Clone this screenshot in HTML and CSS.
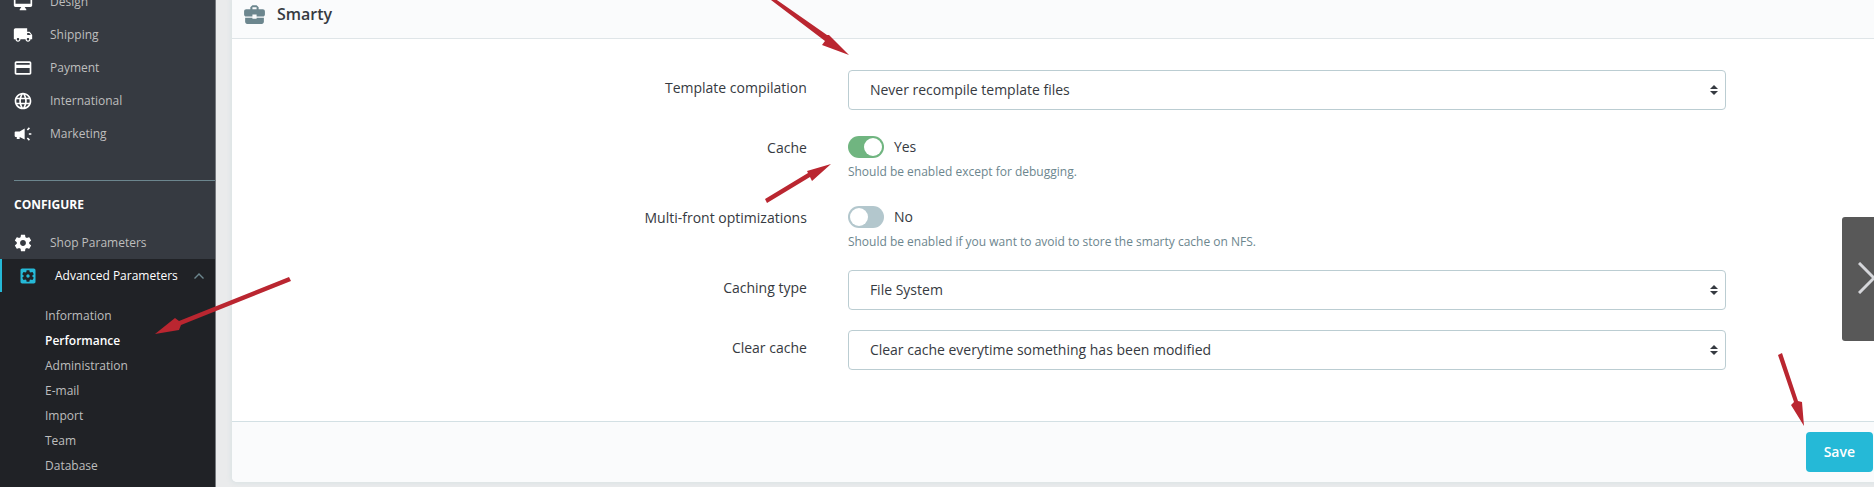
FILE: index.html
```
<!DOCTYPE html>
<html lang="en">
<head>
<meta charset="UTF-8">
<meta name="viewport" content="width=device-width, initial-scale=1.0">
<title>Performance</title>
<link rel="stylesheet" href="styles.css">
</head>
<body>
<nav class="sidebar">
    <a class="item" href="#"><svg viewBox="0 0 24 24"><path d="M21 2H3c-1.100 0-2 .9-2 2v12c0 1.100.9 2 2 2h7l-2 3v1h8v-1l-2-3h7c1.100 0 2-.9 2-2V4c0-1.100-.9-2-2-2zm0 12H3V4h18v10z"/></svg>Design</a>
    <a class="item" href="#"><svg viewBox="0 0 24 24"><path d="M20 8h-3V4H3c-1.100 0-2 .9-2 2v11h2c0 1.660 1.340 3 3 3s3-1.340 3-3h6c0 1.660 1.340 3 3 3s3-1.340 3-3h2v-5l-3-4zM6 18.500c-.83 0-1.500-.67-1.500-1.500s.67-1.500 1.500-1.500 1.500.67 1.500 1.500-.67 1.500-1.500 1.500zm13.500-9l1.960 2.500H17V9.500h2.500zm-1.500 9c-.83 0-1.500-.67-1.500-1.500s.67-1.500 1.500-1.500 1.500.67 1.500 1.500-.67 1.500-1.500 1.500z"/></svg>Shipping</a>
    <a class="item" href="#"><svg viewBox="0 0 24 24"><path d="M20 4H4c-1.110 0-2 .89-2 2v12c0 1.110.89 2 2 2h16c1.110 0 2-.89 2-2V6c0-1.110-.89-2-2-2zm0 14H4v-6h16v6zm0-10H4V6h16v2z"/></svg>Payment</a>
    <a class="item" href="#"><svg viewBox="0 0 24 24"><path d="M11.990 2C6.470 2 2 6.480 2 12s4.470 10 9.990 10C17.520 22 22 17.520 22 12S17.520 2 11.990 2zm6.930 6h-2.950c-.32-1.250-.78-2.450-1.380-3.560 1.840.63 3.370 1.910 4.330 3.560zM12 4.040c.83 1.200 1.480 2.530 1.910 3.960h-3.820c.43-1.430 1.080-2.760 1.910-3.960zM4.260 14C4.100 13.360 4 12.690 4 12s.1-1.360.26-2h3.380c-.08.66-.14 1.320-.14 2s.06 1.340.14 2H4.260zm.82 2h2.950c.32 1.250.78 2.450 1.380 3.560-1.840-.63-3.370-1.900-4.330-3.560zm2.950-8H5.080c.96-1.660 2.490-2.930 4.330-3.560C8.810 5.550 8.350 6.750 8.030 8zM12 19.960c-.83-1.200-1.480-2.530-1.910-3.960h3.820c-.43 1.430-1.080 2.760-1.910 3.960zM14.340 14H9.660c-.09-.66-.16-1.320-.16-2s.07-1.350.16-2h4.680c.09.65.16 1.320.16 2s-.07 1.340-.16 2zm.25 5.560c.6-1.110 1.060-2.310 1.380-3.560h2.950c-.96 1.650-2.490 2.930-4.330 3.560zM16.360 14c.08-.66.14-1.320.14-2s-.06-1.340-.14-2h3.380c.16.64.26 1.310.26 2s-.1 1.360-.26 2h-3.380z"/></svg>International</a>
    <a class="item" href="#"><svg viewBox="0 0 24 24"><path d="M2 10c0-.6.400-1 1-1h5l6-3.500v13L8 15.500V18H4.500v-2.500H3c-.6 0-1-.4-1-1zM19 11h3v2h-3zM16.500 6.500l2.500-2.500 1.400 1.400-2.500 2.500zM16.500 17.500l1.400-1.400 2.500 2.500L19 20z"/></svg>Marketing</a>

    <h2 class="title">CONFIGURE</h2>
    <a class="item" href="#"><svg viewBox="0 0 24 24"><path d="M19.430 12.980c.04-.32.07-.64.07-.98s-.03-.66-.07-.98l2.110-1.650c.19-.15.24-.42.12-.64l-2-3.460c-.12-.22-.39-.3-.61-.22l-2.490 1c-.52-.4-1.080-.73-1.690-.98l-.38-2.650C14.460 2.180 14.250 2 14 2h-4c-.25 0-.46.18-.49.42l-.38 2.650c-.61.25-1.170.59-1.690.98l-2.490-1c-.23-.09-.49 0-.61.22l-2 3.460c-.13.22-.07.49.12.64l2.110 1.650c-.04.32-.07.65-.07.98s.03.66.07.98l-2.110 1.650c-.19.15-.24.42-.12.64l2 3.460c.12.22.39.3.61.22l2.490-1c.52.4 1.080.73 1.690.98l.38 2.650c.03.24.24.42.49.42h4c.25 0 .46-.18.49-.42l.38-2.650c.61-.25 1.170-.59 1.690-.98l2.490 1c.23.09.49 0 .61-.22l2-3.460c.12-.22.07-.49-.12-.64l-2.110-1.650zM12 15.500c-1.930 0-3.500-1.570-3.500-3.500s1.570-3.500 3.500-3.500 3.500 1.570 3.500 3.500-1.570 3.500-3.500 3.500z"/></svg>Shop Parameters</a>

    <div class="open">
        <a class="item current" href="#"><svg viewBox="0 0 24 24"><path d="M12 10c-1.100 0-2 .9-2 2s.9 2 2 2 2-.9 2-2-.9-2-2-2zm7-7H5c-1.110 0-2 .9-2 2v14c0 1.100.89 2 2 2h14c1.110 0 2-.9 2-2V5c0-1.100-.89-2-2-2zm-1.750 9c0 .23-.02.46-.05.68l1.480 1.160c.13.11.17.3.08.45l-1.400 2.420c-.09.15-.27.21-.43.15l-1.740-.7c-.36.28-.76.51-1.180.69l-.26 1.850c-.03.17-.18.3-.35.3h-2.800c-.17 0-.32-.13-.35-.29l-.26-1.850c-.43-.18-.82-.41-1.180-.69l-1.740.7c-.16.06-.34 0-.43-.15l-1.400-2.420c-.09-.15-.05-.34.08-.45l1.480-1.160c-.03-.23-.05-.46-.05-.69s.02-.46.05-.68l-1.480-1.160c-.13-.11-.17-.3-.08-.45l1.400-2.420c.09-.15.27-.21.43-.15l1.740.7c.36-.28.76-.51 1.180-.69l.26-1.850c.03-.17.18-.3.35-.3h2.800c.17 0 .32.13.35.29l.26 1.850c.43.18.82.41 1.180.69l1.740-.7c.16-.06.34 0 .43.15l1.400 2.420c.09.15.05.34-.08.45l-1.480 1.160c.03.23.05.46.05.69z"/></svg>Advanced Parameters<svg class="chevron" viewBox="0 0 10 6"><path d="M5 0l5 5-1 1-4-4-4 4-1-1z"/></svg></a>
        <ul class="submenu">
            <li><a href="#">Information</a></li>
            <li><a class="active" href="#">Performance</a></li>
            <li><a href="#">Administration</a></li>
            <li><a href="#">E-mail</a></li>
            <li><a href="#">Import</a></li>
            <li><a href="#">Team</a></li>
            <li><a href="#">Database</a></li>
        </ul>
        <svg class="arrow arrow-menu" viewBox="0 0 136 58"><path d="M134 0L136 4 26 48 24 53 0 57 20 41 24 44z"/></svg>
    </div>
</nav>

<main class="main">
    <form class="card">
        <header class="card-header">
            <svg viewBox="0 0 24 24"><path d="M10 16v-1H3.010L3 19c0 1.110.89 2 2 2h14c1.110 0 2-.89 2-2v-4h-7v1h-4zm10-9h-4.010V5l-2-2h-4l-2 2v2H4c-1.100 0-2 .9-2 2v3c0 1.110.89 2 2 2h6v-2h4v2h6c1.100 0 2-.9 2-2V9c0-1.100-.9-2-2-2zm-6 0h-4V5h4v2z"/></svg>
            <h3>Smarty</h3>
        </header>
        <div class="card-body">
            <div class="row">
                <label for="compilation">Template compilation</label>
                <div class="field">
                    <select id="compilation"><option>Never recompile template files</option></select>
                    <svg class="sort" viewBox="0 0 8 10"><path d="M4 0l4 4H0zM0 6h8l-4 4z"/></svg>
                    <svg class="arrow arrow-select" viewBox="0 0 78 58"><path d="M0 2L3 0 56 37 58 37 78 57 51 47 54 43z"/></svg>
                </div>
            </div>
            <div class="row">
                <label for="cache">Cache</label>
                <div class="field">
                    <div class="switch"><input type="checkbox" id="cache" checked><span>Yes</span></div>
                    <p class="hint">Should be enabled except for debugging.</p>
                    <svg class="arrow arrow-switch" viewBox="0 0 66 39"><path d="M0 35L43 9 42 7 66 0 47 17 45 13 2 39z"/></svg>
                </div>
            </div>
            <div class="row">
                <label for="multifront">Multi-front optimizations</label>
                <div class="field">
                    <div class="switch"><input type="checkbox" id="multifront"><span>No</span></div>
                    <p class="hint">Should be enabled if you want to avoid to store the smarty cache on NFS.</p>
                </div>
            </div>
            <div class="row">
                <label for="caching">Caching type</label>
                <div class="field">
                    <select id="caching"><option>File System</option></select>
                    <svg class="sort" viewBox="0 0 8 10"><path d="M4 0l4 4H0zM0 6h8l-4 4z"/></svg>
                </div>
            </div>
            <div class="row">
                <label for="clear">Clear cache</label>
                <div class="field">
                    <select id="clear"><option>Clear cache everytime something has been modified</option></select>
                    <svg class="sort" viewBox="0 0 8 10"><path d="M4 0l4 4H0zM0 6h8l-4 4z"/></svg>
                </div>
            </div>
        </div>
        <footer class="card-footer">
            <button class="save" type="submit">Save</button>
            <svg class="arrow arrow-save" viewBox="0 0 27 73"><path d="M0 2L4 0 20 48 24 49 26 73 13 52 16 49z"/></svg>
        </footer>
    </form>
</main>

<button class="next" type="button" aria-label="Next"><svg viewBox="0 0 16 32"><path d="M1 1l15 15L1 31"/></svg></button>
</body>
</html>
```
FILE: styles.css
```
* {
    box-sizing: border-box;
}
body {
    margin: 0;
    height: 100vh;
    overflow: hidden;
    display: flex;
    background: #eaebec;
    color: #363a41;
    font-family: "Open Sans", sans-serif;
    font-size: 14px;
    line-height: 20px;
}
a {
    color: inherit;
    text-decoration: none;
}

/* sidebar */
.sidebar {
    flex: none;
    width: 216px;
    display: flex;
    flex-direction: column;
    margin-top: -15px;
    border-right: 1px solid #76797e;
    background: #363a41;
    color: #bebebe;
    font-size: 12px;
}
.item {
    display: flex;
    align-items: center;
    gap: 17px;
    height: 33px;
    padding-left: 13px;
}
.item svg {
    flex: none;
    width: 20px;
    height: 20px;
    fill: #fff;
}
.title {
    margin: 30px 0 11px 14px;
    padding-top: 14px;
    border-top: 1px solid #6c868e;
    color: #fff;
    font-size: 12px;
    font-weight: 700;
}
.open {
    position: relative;
    flex: 1;
    background: #202226;
}
.item.current {
    padding-left: 16px;
    border-left: 2px solid #25b9d7;
    color: #fff;
}
.item.current svg {
    fill: #25b9d7;
}
.item.current .chevron {
    width: 10px;
    height: 6px;
    margin-left: -1px;
    fill: #6c868e;
}
.submenu {
    list-style: none;
    margin: 0;
    padding: 11px 0 0 45px;
}
.submenu a {
    display: block;
    line-height: 25px;
}
.submenu .active {
    color: #fff;
    font-weight: 600;
}

/* card */
.main {
    flex: 1;
    min-width: 0;
    padding-left: 16px;
}
.card {
    background: #fff;
    border-radius: 0 0 0 5px;
    box-shadow: 0 0 4px 2px #dde4e6;
}
.card-header {
    display: flex;
    align-items: center;
    gap: 10px;
    height: 39px;
    padding: 0 10px 10px;
    border-bottom: 1px solid #dfe5e8;
    background: #fafbfc;
}
.card-header svg {
    width: 25px;
    height: 25px;
    fill: #6c868e;
}
.card-header h3 {
    margin: 0;
    font-size: 16px;
    font-weight: 600;
}
.card-body {
    display: grid;
    gap: 20px;
    padding: 31px 9% 51px 0;
}
.row {
    display: grid;
    grid-template-columns: 574fr 877fr;
    gap: 41px;
}
.row label {
    padding-top: 8px;
    text-align: right;
}
.field {
    position: relative;
}
select {
    display: block;
    width: 100%;
    height: 40px;
    padding: 0 21px;
    border: 1px solid #bbcdd2;
    border-radius: 4px;
    appearance: none;
    background: #fff;
    color: inherit;
    font: inherit;
}
.sort {
    position: absolute;
    top: 15px;
    right: 8px;
    width: 8px;
    height: 10px;
    fill: #363a41;
}
.switch {
    display: flex;
    align-items: center;
    gap: 10px;
    height: 34px;
}
.switch input {
    display: flex;
    appearance: none;
    width: 36px;
    height: 22px;
    margin: 0;
    padding: 2px;
    border-radius: 11px;
    background: #b3c7cd;
}
.switch input::before {
    content: "";
    width: 18px;
    height: 18px;
    border-radius: 50%;
    background: #fff;
}
.switch input:checked {
    justify-content: flex-end;
    background: #70b580;
}
.hint {
    margin: 0;
    color: #6c868e;
    font-size: 12px;
    line-height: 16px;
}
.card-footer {
    position: relative;
    display: flex;
    justify-content: flex-end;
    padding: 10px 1px;
    border-top: 1px solid #d3e0e4;
    border-radius: 0 0 0 5px;
    background: #fafbfc;
}
.save {
    height: 40px;
    padding: 0 18px;
    border: 0;
    border-radius: 4px;
    background: #25b9d7;
    color: #fff;
    font: inherit;
    font-weight: 600;
}

.next {
    position: fixed;
    top: 217px;
    right: 0;
    width: 32px;
    height: 124px;
    padding: 0;
    border: 0;
    border-radius: 3px 0 0 3px;
    background: #585858;
    text-align: right;
}
.next svg {
    width: 16px;
    height: 32px;
    fill: none;
    stroke: #d5d6da;
    stroke-width: 3;
}

/* red pointers */
.arrow {
    position: absolute;
    z-index: 1;
    overflow: visible;
    fill: #ba2630;
}
.arrow-menu {
    top: 18px;
    left: 155px;
    width: 136px;
}
.arrow-select {
    top: -72px;
    left: -77px;
    width: 78px;
}
.arrow-switch {
    top: 34px;
    left: -83px;
    width: 66px;
}
.arrow-save {
    top: -69px;
    right: 69px;
    width: 27px;
}
```
